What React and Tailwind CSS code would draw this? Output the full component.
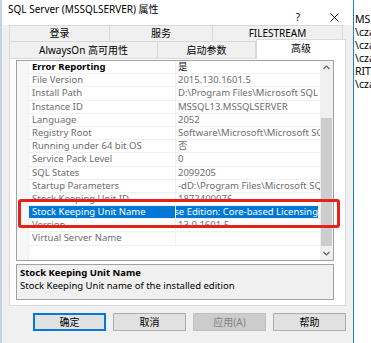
const rows = [
  { label: 'Error Reporting', value: '是', bold: true },
  { label: 'File Version', value: '2015.130.1601.5' },
  { label: 'Install Path', value: 'D:\\Program Files\\Microsoft SQL Server\\MSSQL13.MSSQLSERVER\\MSSQL' },
  { label: 'Instance ID', value: 'MSSQL13.MSSQLSERVER' },
  { label: 'Language', value: '2052' },
  { label: 'Registry Root', value: 'Software\\Microsoft\\Microsoft SQL Server\\MSSQL13.MSSQLSERVER' },
  { label: 'Running under 64 bit OS', value: '否' },
  { label: 'Service Pack Level', value: '0' },
  { label: 'SQL States', value: '2099205' },
  { label: 'Startup Parameters', value: '-dD:\\Program Files\\Microsoft SQL Server\\MSSQL13' },
  { label: 'Stock Keeping Unit ID', value: '1872400076' },
  { label: 'Stock Keeping Unit Name', value: 'Enterprise Edition: Core-based Licensing', selected: true },
  { label: 'Version', value: '13.0.1601.5' },
  { label: 'Virtual Server Name', value: '' },
];

const font = "font-['Noto_Sans','Noto_Sans_CJK_SC',sans-serif]";

function Row({ label, value, bold, selected }) {
  if (selected) {
    return (
      <div className="flex h-[13.2px] border-b border-[#f0f0f0] leading-[12px]">
        <div className="w-[147px] shrink-0 bg-[#0078d7] text-white pl-[3px] border-r border-[#f0f0f0] whitespace-nowrap overflow-hidden">
          {label}
        </div>
        <div className="flex-1 min-w-0 flex justify-end overflow-hidden pr-[2px] whitespace-nowrap">
          <span className="bg-[#0078d7] text-white pl-[2px]">{value}</span>
          <span className="w-px bg-black h-[11px] mt-px" />
        </div>
      </div>
    );
  }
  return (
    <div className="flex h-[13.2px] border-b border-[#f0f0f0] leading-[12px]">
      <div
        className={`w-[147px] shrink-0 pl-[3px] border-r border-[#f0f0f0] whitespace-nowrap overflow-hidden ${
          bold ? 'font-bold text-black' : 'text-[#6d6d6d]'
        }`}
      >
        {label}
      </div>
      <div
        className={`flex-1 min-w-0 pl-[2px] whitespace-nowrap overflow-hidden ${
          bold ? 'text-[#222]' : 'text-[#6d6d6d]'
        }`}
      >
        {value}
      </div>
    </div>
  );
}

function Chevron({ up }) {
  return (
    <svg width="7" height="5" viewBox="0 0 7 5">
      <polyline
        points={up ? '0.5,4 3.5,1 6.5,4' : '0.5,1 3.5,4 6.5,1'}
        fill="none"
        stroke="#606060"
        strokeWidth="1.2"
      />
    </svg>
  );
}

function Tab({ children, className }) {
  return (
    <div
      className={`flex items-center justify-center border-t border-l border-r border-[#d9d9d9] bg-[#f0f0f0] text-black ${className}`}
    >
      {children}
    </div>
  );
}

function Button({ children, primary, disabled }) {
  return (
    <div
      className={`w-[73px] h-[18px] flex items-center justify-center ${
        primary
          ? 'border-2 border-[#0078d7] bg-[#e1e1e1] text-black'
          : disabled
          ? 'border border-[#bfbfbf] bg-[#cccccc] text-[#838383]'
          : 'border border-[#adadad] bg-[#e1e1e1] text-black'
      }`}
    >
      {children}
    </div>
  );
}

export default function App() {
  return (
    <div className={`relative flex w-[371px] h-[343px] overflow-hidden bg-white text-[9.5px] ${font}`}>
      <div className="w-[2px] shrink-0 bg-[#c5d3e2]" />

      {/* dialog */}
      <div className="w-[351px] shrink-0 flex flex-col bg-[#f0f0f0]">
        <div className="h-[25px] bg-white flex items-start">
          <div className="pl-[6px] pt-[3px] text-[10px] leading-[12px] text-black whitespace-nowrap">
            SQL Server (MSSQLSERVER) 属性
          </div>
          <div className="ml-auto flex items-center h-full pt-[9px] pr-[14px] gap-[30px]">
            <span className="text-[10px] leading-[12px] text-black">?</span>
            <svg width="9" height="9" viewBox="0 0 9 9">
              <path d="M0.5 0.5 L8.5 8.5 M8.5 0.5 L0.5 8.5" stroke="#111" strokeWidth="1" />
            </svg>
          </div>
        </div>

        <div className="px-[7px] flex flex-col">
          {/* tab row 1 */}
          <div className="flex h-[16px] text-[10px]">
            <Tab className="w-[101px]">登录</Tab>
            <Tab className="w-[103px] border-l-0">服务</Tab>
            <Tab className="w-[130px] border-l-0">FILESTREAM</Tab>
          </div>
          {/* tab row 2 */}
          <div className="flex h-[17px] text-[10px]">
            <Tab className="w-[149px]">AlwaysOn 高可用性</Tab>
            <Tab className="w-[98px] border-l-0">启动参数</Tab>
            <div className="w-[90px] -mt-[2px] h-[20px] -mb-px z-10 flex items-center justify-center bg-white border-t border-l border-r border-[#d9d9d9] text-black pb-[2px]">
              高级
            </div>
          </div>

          {/* panel */}
          <div className="h-[248px] bg-white border border-[#d9d9d9] flex flex-col">
            <div className="ml-[6px] mt-px w-[318px] h-[201px] border border-[#a0a0a0] flex">
              <div className="w-[12px] shrink-0 bg-[#f7f7f7] border-r border-[#f0f0f0]" />
              <div className="w-[291px] shrink-0 flex flex-col bg-white">
                {rows.map((r) => (
                  <Row key={r.label} {...r} />
                ))}
              </div>
              <div className="w-[13px] shrink-0 flex flex-col bg-[#f0f0f0]">
                <div className="h-[13px] flex items-center justify-center">
                  <Chevron up />
                </div>
                <div className="h-[44px]" />
                <div className="h-[128px] bg-[#cdcdcd] mx-px" />
                <div className="h-[14px] flex items-center justify-center">
                  <Chevron />
                </div>
              </div>
            </div>

            <div className="ml-[6px] mt-[3px] w-[318px] h-[36px] border border-[#a0a0a0] bg-[#f0f0f0] px-[3px] pt-[1px] flex flex-col leading-[13px]">
              <div className="font-bold text-black">Stock Keeping Unit Name</div>
              <div className="text-black">Stock Keeping Unit name of the installed edition</div>
            </div>
          </div>
        </div>

        {/* buttons */}
        <div className="flex pl-[31px] gap-[7px] mt-[7px] text-[10px]">
          <Button primary>确定</Button>
          <Button>取消</Button>
          <Button disabled>应用(A)</Button>
          <Button>帮助</Button>
        </div>
      </div>

      <div className="w-px shrink-0 bg-[#1883d7]" />

      {/* window behind */}
      <div className="w-[17px] shrink-0 bg-white pt-[13px] pl-[1px] text-[10.5px] leading-[13px] text-black whitespace-nowrap overflow-hidden">
        <div>MS</div>
        <div>\cza</div>
        <div>\cza</div>
        <div>\cza</div>
        <div>RITY</div>
        <div>\cza</div>
      </div>

      {/* red annotation */}
      <div className="absolute left-[18px] top-[199px] w-[322px] h-[29px] border-[3px] border-[#e8201a] rounded-[3px] pointer-events-none" />
    </div>
  );
}
